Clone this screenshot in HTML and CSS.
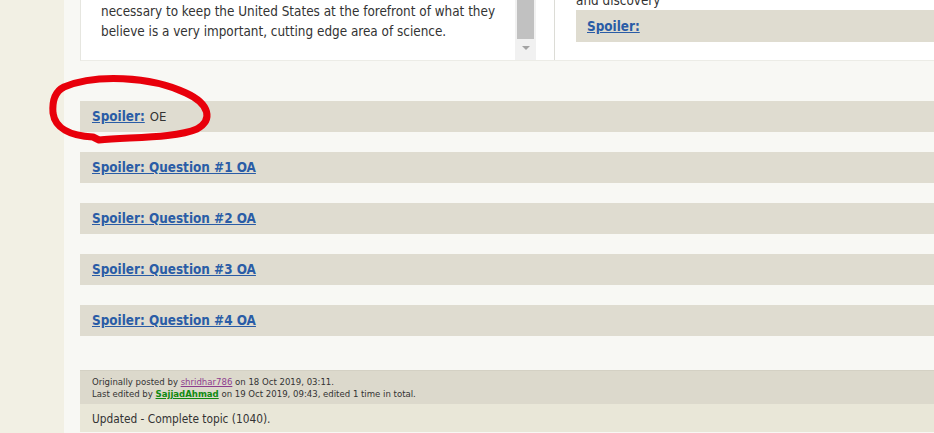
FILE: index.html
```html
<!DOCTYPE html>
<html>
<head>
<meta charset="utf-8">
<link rel="stylesheet" href="styles.css">
</head>
<body>
<div class="page">
  <div class="gutter"></div>
  <div class="main">
    <div class="post-top">
      <div class="quote-cell">
        <div class="quote-text">
          <p>necessary to keep the United States at the forefront of what they<br>believe is a very important, cutting edge area of science.</p>
        </div>
        <div class="scrollbar">
          <div class="thumb"></div>
          <div class="arrow"></div>
        </div>
      </div>
      <div class="side-cell">
        <div class="side-text">and discovery</div>
        <div class="spoiler side-spoiler"><a href="#" class="spoiler-link">Spoiler:</a></div>
      </div>
    </div>

    <div class="spoilers">
      <div class="spoiler"><a href="#" class="spoiler-link">Spoiler:</a> <span class="spoiler-title">OE</span></div>
      <div class="spoiler"><a href="#" class="spoiler-link">Spoiler: Question #1 OA</a></div>
      <div class="spoiler"><a href="#" class="spoiler-link">Spoiler: Question #2 OA</a></div>
      <div class="spoiler"><a href="#" class="spoiler-link">Spoiler: Question #3 OA</a></div>
      <div class="spoiler"><a href="#" class="spoiler-link">Spoiler: Question #4 OA</a></div>
    </div>

    <div class="notice">
      <div class="notice-meta">
        <div>Originally posted by <a href="#" class="user-purple">shridhar786</a> on 18 Oct 2019, 03:11.</div>
        <div>Last edited by <a href="#" class="user-green">SajjadAhmad</a> on 19 Oct 2019, 09:43, edited 1 time in total.</div>
      </div>
      <div class="notice-reason">Updated - Complete topic (1040).</div>
    </div>
  </div>
</div>
<svg class="annotation" width="934" height="433" viewBox="0 0 934 433">
  <path d="M 64 87 C 95 74, 150 76, 186 93 C 210 104, 213 120, 197 129 C 176 138, 132 137, 99 140 L 93 137 C 70 136, 55 128, 53 113 C 52 100, 56 91, 64 87 Z" fill="none" stroke="#e8000b" stroke-width="7" stroke-linecap="round" stroke-linejoin="round"/>
</svg>
</body>
</html>
```

FILE: styles.css
```css
html, body {
  margin: 0;
  padding: 0;
}
body {
  background: #f2f0e4;
  font-family: "DejaVu Sans Condensed", "DejaVu Sans", sans-serif;
  color: #333333;
  width: 934px;
  height: 433px;
  overflow: hidden;
  position: relative;
}
.page {
  display: flex;
  height: 433px;
}
.gutter {
  width: 64px;
  flex: none;
  background: #f2f0e4;
}
.main {
  flex: 1;
  background: #f8f8f4;
  padding-left: 16px;
  min-width: 0;
}
.post-top {
  display: flex;
  background: #ffffff;
  height: 60px;
  border-left: 1px solid #e6e6e0;
  border-bottom: 1px solid #ecece6;
}
.quote-cell {
  width: 455px;
  flex: none;
  display: flex;
}
.quote-text {
  flex: 1;
  padding-left: 20px;
}
.quote-text p {
  margin: 2px 0 0 0;
  font-size: 13.4px;
  line-height: 20px;
  color: #333333;
}
.scrollbar {
  width: 21px;
  background: #f1f1f1;
  display: flex;
  flex-direction: column;
  align-items: center;
}
.thumb {
  width: 17px;
  height: 39px;
  background: #c1c1c1;
}
.arrow {
  margin-top: 7px;
  width: 0;
  height: 0;
  border-left: 4px solid transparent;
  border-right: 4px solid transparent;
  border-top: 4px solid #a3a3a3;
}
.side-cell {
  flex: 1;
  margin-left: 18px;
  border-left: 1px solid #dcdcd6;
  padding-left: 21px;
}
.side-text {
  margin-top: -9px;
  font-size: 13.4px;
  line-height: 19px;
  color: #333333;
}
.spoiler {
  background: #dfdcd0;
  height: 31px;
  padding-left: 12px;
  display: flex;
  align-items: center;
  font-size: 13.4px;
}
.side-spoiler {
  height: 32px;
  padding-left: 11px;
}
.spoiler-link {
  color: #2a5ca6;
  font-weight: bold;
  text-decoration: underline;
}
.spoiler-title {
  margin-left: 5px;
  color: #333333;
  font-size: 13px;
}
.spoilers {
  margin-top: 40px;
  display: flex;
  flex-direction: column;
  gap: 20px;
}
.notice {
  margin-top: 34px;
}
.notice-meta {
  background: #dcd9cc;
  border-top: 1px solid #d4d1c4;
  padding: 5px 12px 4px 12px;
  font-size: 9.5px;
  line-height: 12px;
  color: #333333;
}
.user-purple {
  color: #8e3d8e;
  text-decoration: underline;
}
.user-green {
  color: #108a10;
  font-weight: bold;
  text-decoration: underline;
}
.notice-reason {
  background: #e9e7d8;
  height: 28px;
  padding-left: 12px;
  padding-top: 2px;
  box-sizing: border-box;
  display: flex;
  align-items: center;
  font-size: 11.8px;
  color: #333333;
}
.annotation {
  position: absolute;
  left: 0;
  top: 0;
  pointer-events: none;
}
```
